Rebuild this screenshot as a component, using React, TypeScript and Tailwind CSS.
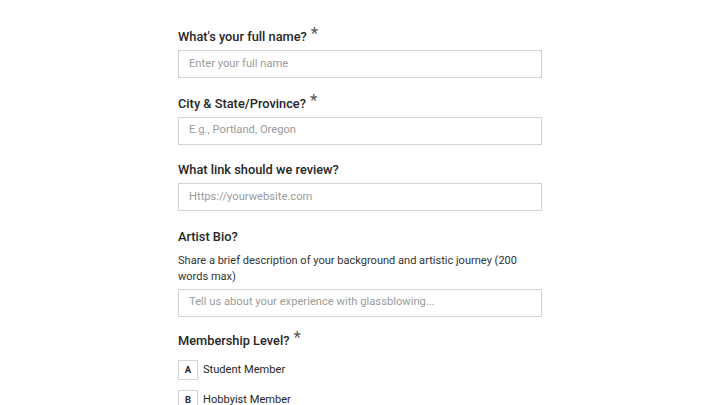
import React from "react";

const font = { fontFamily: 'Roboto, "Noto Sans", sans-serif' };

function Label({ text, required }: { text: string; required?: boolean }) {
  return (
    <div className="flex items-start h-[18px] text-[12.8px] leading-[18px] font-medium text-[#262626]">
      <span>{text}</span>
      {required && <span className="ml-[4px] text-[17px] leading-[18px] font-normal text-[#555] -mt-[4px]">*</span>}
    </div>
  );
}

function Input({ placeholder }: { placeholder: string }) {
  return (
    <div className="mt-[4px] h-[28px] w-full border border-[#d3d3d3] bg-white flex items-center px-[10px] text-[11.2px] text-[#9b9b9b]">
      {placeholder}
    </div>
  );
}

function Option({ letter, text }: { letter: string; text: string }) {
  return (
    <div className="flex items-center h-[20px] gap-[5px]">
      <div className="w-[20px] h-[20px] border border-[#d3d3d3] flex items-center justify-center text-[9.5px] font-bold text-[#262626]">
        {letter}
      </div>
      <span className="text-[11.1px] text-[#262626]">{text}</span>
    </div>
  );
}

export default function App() {
  return (
    <div className="w-[720px] h-[405px] overflow-hidden bg-white" style={font}>
      <div className="w-[364px] mx-auto pt-[28px] flex flex-col">
        <Label text="What's your full name?" required />
        <Input placeholder="Enter your full name" />
        <div className="mt-[16.5px]">
          <Label text="City & State/Province?" required />
          <Input placeholder="E.g., Portland, Oregon" />
        </div>
        <div className="mt-[16.5px]">
          <Label text="What link should we review?" />
          <Input placeholder="Https://yourwebsite.com" />
        </div>
        <div className="mt-[16.5px]">
          <Label text="Artist Bio?" />
          <p className="mt-[7px] text-[11.05px] leading-[16px] text-[#333] pr-[20px]">
            Share a brief description of your background and artistic journey (200 words max)
          </p>
          <div className="mt-[3.5px]">
            <Input placeholder="Tell us about your experience with glassblowing..." />
          </div>
        </div>
        <div className="mt-[15.5px]">
          <Label text="Membership Level?" required />
          <div className="mt-[10px] flex flex-col gap-[10px]">
            <Option letter="A" text="Student Member" />
            <Option letter="B" text="Hobbyist Member" />
          </div>
        </div>
      </div>
    </div>
  );
}
